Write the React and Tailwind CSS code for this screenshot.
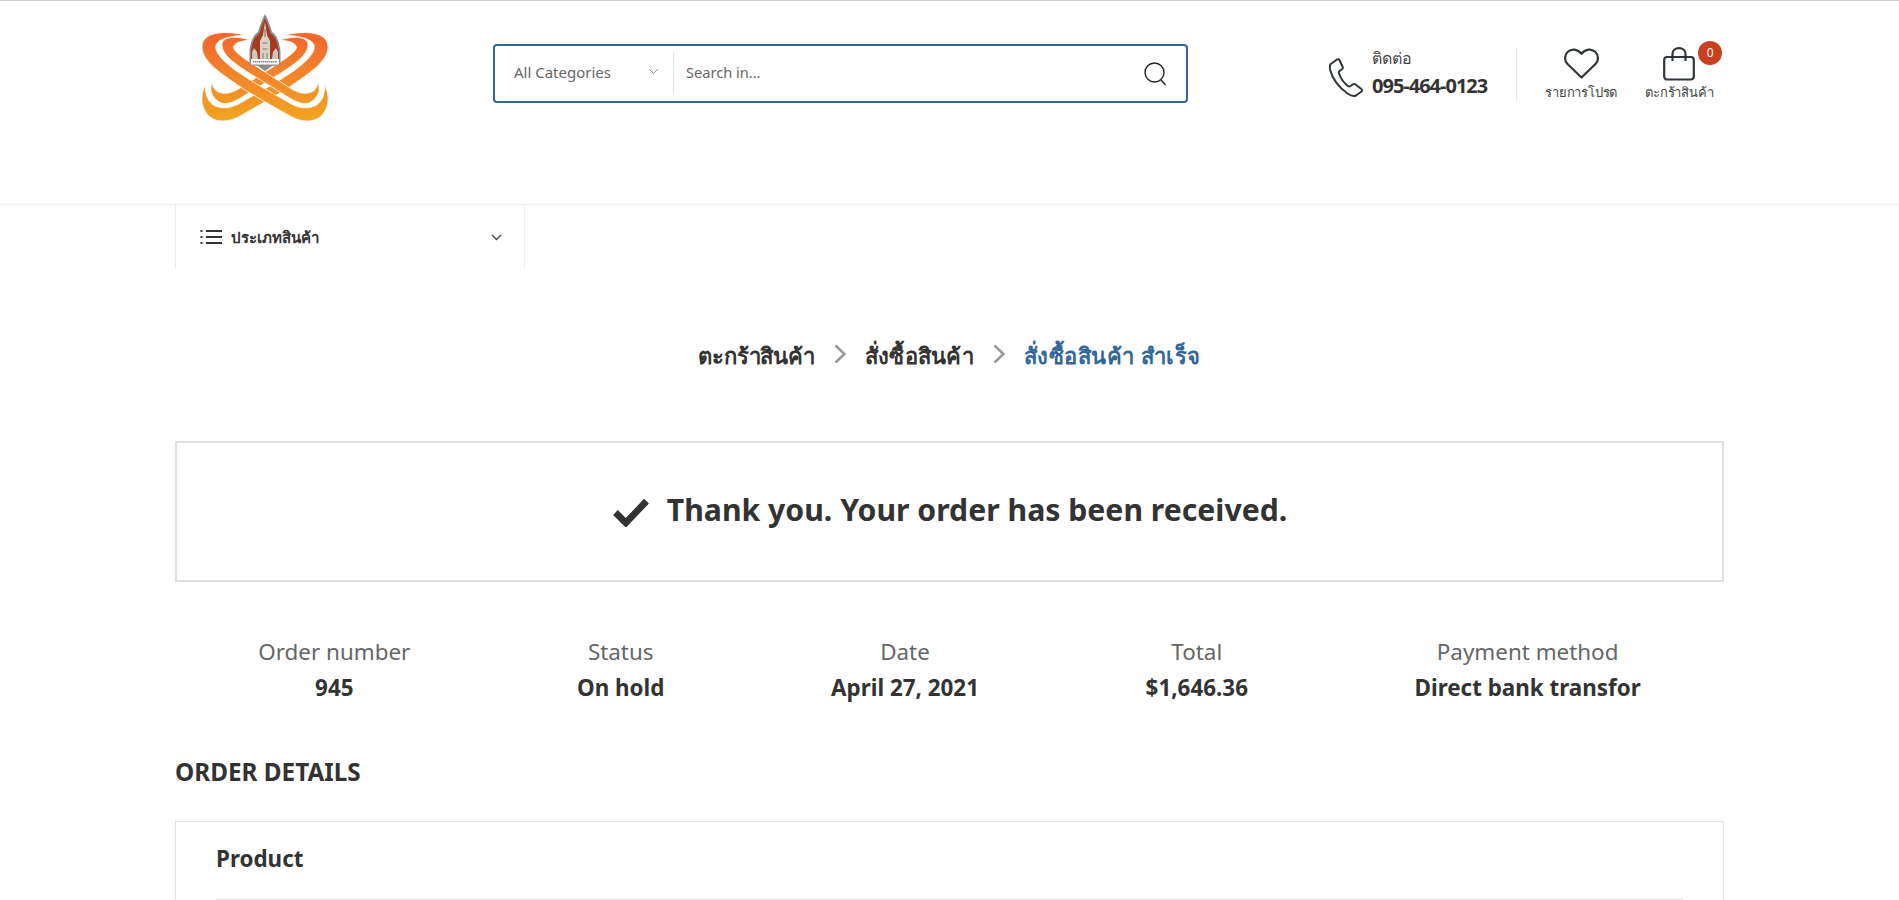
import React from "react";

const FONT = "font-['Noto_Sans',sans-serif]";

function Band({ d, flip }) {
  return <path d={d} fill="url(#swoosh)" stroke="#fff" strokeWidth="0.8" transform={flip ? "translate(150 0) scale(-1 1)" : undefined} />;
}

function Logo() {
  const outer = "M55 30C34 25 12 27 12 42C12 57 32 69 52 83C68 93 84 102 100 111C112 118 126 118 133 109C140 100 139 90 135 80C135 92 130 100 122 102C114 104 106 102 98 97C82 88 62 77 45 65C33 56 24 47 26 40C28 34 40 31 55 30Z";
  const inner = "M60 35C44 30 31 32 32 41C33 50 44 58 56 66C70 75 84 83 98 92C106 97 114 101 121 97C128 92 131 86 128 77C127 84 124 87 118 88C112 89 106 87 100 83C86 74 70 64 55 54C47 48 42 44 44 41C46 37 52 36 60 35Z";
  return (
    <svg width="150" height="120" viewBox="0 0 150 120" className="block">
      <defs>
        <linearGradient id="swoosh" x1="0" y1="30" x2="0" y2="115" gradientUnits="userSpaceOnUse">
          <stop offset="0" stopColor="#f2662c" />
          <stop offset="0.55" stopColor="#f28a2a" />
          <stop offset="1" stopColor="#f2a41f" />
        </linearGradient>
      </defs>
      <Band d={outer} flip />
      <Band d={inner} flip />
      <Band d={outer} />
      <Band d={inner} />
      <path d="M75 9C72 15 70 20 68 27C63 30 60 38 59.500 48V60L68 61L75 66L82 61L90.500 60V48C90 38 87 30 82 27C80 20 78 15 75 9Z" fill="#8a8a8a" />
      <path d="M75 13C73 18 71 23 69.500 28.500C65 31 61.500 38 61 48V54H89V48C88.500 38 85 31 80.500 28.500C79 23 77 18 75 13Z" fill="#a8391f" />
      <path d="M75 17L77 30L80 36V54H70V36L73 30Z" fill="#d9d2c7" />
      <path d="M75 24V32M72.500 38H77.500M72.500 44H77.500M73 48V54M77 48V54" stroke="#6d5a50" strokeWidth="0.8" />
      <path d="M64 43L67 47L68 54H62V47ZM86 43L83 47L82 54H88V47Z" fill="#cfc8bc" />
      <rect x="61" y="54" width="28" height="5.500" fill="#fff" />
      <path d="M63 56.800H87" stroke="#444" strokeWidth="1" strokeDasharray="1.500 0.500" />
    </svg>
  );
}

function PhoneIcon() {
  return (
    <svg width="34" height="39" viewBox="0 0 34 39" fill="none" stroke="#2f353b" strokeWidth="2" strokeLinejoin="round" className="block">
      <path d="M8 1.500L1.800 6C0.500 7 0.700 9.500 1.200 12C3 20 10 30 18.500 35.500C21.500 37.500 25 38.500 27 37.500L32.500 33.500C33.300 32.800 33 31.500 32 30.800L26.500 26.500C25.500 25.800 24.500 25.800 23.500 26.500L21.500 28C20.500 28.700 19.500 28.500 18.500 27.700C15 24.800 11.500 19.800 10 15.500C9.600 14.300 10 13.300 11 12.700L13 11.300C14 10.500 14 9.500 13.500 8.500L10.500 2.200C10 1.200 9 0.800 8 1.500Z" />
    </svg>
  );
}

function Stat({ label, value }) {
  return (
    <div className="text-center">
      <div className="text-[22.4px] leading-[36px] text-[#666]">{label}</div>
      <div className="text-[22.4px] leading-[36px] font-bold text-[#333]">{value}</div>
    </div>
  );
}

function Chevron() {
  return (
    <svg width="12" height="20" viewBox="0 0 12 20" fill="none" stroke="#999" strokeWidth="2.600" className="block mx-[19px] mb-[3px]">
      <path d="M1.500 1.500L10.500 10L1.500 18.500" />
    </svg>
  );
}

export default function App() {
  return (
    <div className={`${FONT} h-[900px] overflow-hidden bg-white text-[#333] border-t border-[#cfcfcf]`}>
      <header className="h-[204px] border-b border-[#eeeeee]">
        <div className="w-[1549px] mx-auto flex items-start">
          <div className="w-[318px] pl-[15px] pt-[4px]">
            <Logo />
          </div>
          <div className="mt-[43px] w-[695px] h-[59px] border-2 border-[#336699] rounded-[4px] flex items-center">
            <div className="w-[179px] h-[43px] border-r border-[#e1e1e1] flex items-center justify-between pl-[19px] pr-[14px]">
              <span className="text-[15px] text-[#666] mb-[2px]">All Categories</span>
              <svg width="11" height="7" viewBox="0 0 11 7" fill="none" stroke="#888" strokeWidth="1" className="block mb-[4px]">
                <path d="M1 1L5.500 5.500L10 1" />
              </svg>
            </div>
            <span className="pl-[12px] text-[14.600px] text-[#666] flex-1 mb-[2px]">Search in...</span>
            <svg width="23" height="24" viewBox="0 0 23 24" fill="none" stroke="#222" strokeWidth="1.400" className="block mr-[19px]">
              <circle cx="10.500" cy="10.500" r="9.500" />
              <path d="M17 18L21.500 23" />
            </svg>
          </div>
          <div className="ml-[141px] mt-[53px] flex items-center">
            <PhoneIcon />
            <div className="ml-[9px] mt-[-7px]">
              <div className="text-[16px] leading-[22px] text-[#444]">ติดต่อ</div>
              <div className="text-[20px] leading-[30px] mt-[2px] font-bold tracking-[-1px] text-[#333]">095-464-0123</div>
            </div>
          </div>
          <div className="ml-[29px] mt-[47px] w-px h-[53px] bg-[#e6e6e6]" />
          <div className="ml-[28px] mt-[47px] w-[72px] flex flex-col items-center">
            <svg width="35" height="31" viewBox="0 0 35 31" fill="none" stroke="#2f353b" strokeWidth="2.200" strokeLinejoin="round" className="block">
              <path d="M17.500 29.500L3.500 16C0 12.500 0.500 7 3.800 3.800C7.500 0.300 13.500 0.800 17.500 5.800C21.500 0.800 27.500 0.300 31.200 3.800C34.500 7 35 12.500 31.500 16Z" />
            </svg>
            <div className="mt-[3px] text-[13px] leading-[20px] tracking-[-0.2px] text-[#444] whitespace-nowrap">รายการโปรด</div>
          </div>
          <div className="ml-[28px] mt-[46px] w-[68px] relative flex flex-col items-center">
            <svg width="32" height="34" viewBox="0 0 32 34" fill="none" stroke="#2f353b" strokeWidth="2.200" strokeLinejoin="round" className="block">
              <rect x="1.200" y="10" width="29.600" height="22.500" rx="3" />
              <path d="M9.500 14V7C9.500 3.500 12 1.200 16 1.200C20 1.200 22.500 3.500 22.500 7V14" />
            </svg>
            <div className="mt-[1px] text-[13px] leading-[20px] tracking-[-0.2px] text-[#444] whitespace-nowrap">ตะกร้าสินค้า</div>
            <span className="absolute left-[53px] top-[-6px] w-[24px] h-[24px] rounded-full bg-[#c8401f] text-white text-[12px] leading-[24px] text-center">0</span>
          </div>
        </div>
      </header>

      <nav className="w-[1549px] mx-auto">
        <div className="w-[350px] h-[64px] border-x border-[#eeeeee] flex items-center pl-[24px] pr-[22px]">
          <svg width="22" height="16" viewBox="0 0 22 16" fill="none" stroke="#333" strokeWidth="1.800" className="block">
            <path d="M6 2H22M6 8H22M6 14H22" />
            <path d="M0.500 2H2.500M0.500 8H2.500M0.500 14H2.500" />
          </svg>
          <span className="ml-[9px] text-[15px] font-semibold text-[#333] flex-1">ประเภทสินค้า</span>
          <svg width="11" height="7" viewBox="0 0 11 7" fill="none" stroke="#444" strokeWidth="1.300" className="block">
            <path d="M1 1L5.500 5.500L10 1" />
          </svg>
        </div>
      </nav>

      <main className="w-[1549px] mx-auto">
        <div className="mt-[64px] h-[44px] flex items-center justify-center text-[22px] font-bold">
          <span className="text-[#333] tracking-[-0.2px]">ตะกร้าสินค้า</span>
          <Chevron />
          <span className="text-[#333] tracking-[0.3px]">สั่งซื้อสินค้า</span>
          <Chevron />
          <span className="text-[#336699] tracking-[0.45px]">สั่งซื้อสินค้า สำเร็จ</span>
        </div>

        <div className="mt-[64px] h-[141px] border-2 border-[#dfdfdf] flex items-center justify-center">
          <svg width="38" height="29" viewBox="0 0 36 28" fill="none" stroke="#333" strokeWidth="6.500" strokeLinejoin="miter" className="block mr-[17px] mt-[2px]">
            <path d="M3 14L13 24L33 3" />
          </svg>
          <h2 className="text-[30.200px] font-bold text-[#333] mb-[4px]">Thank you. Your order has been received.</h2>
        </div>

        <div className="mt-[52px] flex justify-around">
          <Stat label="Order number" value="945" />
          <Stat label="Status" value="On hold" />
          <Stat label="Date" value="April 27, 2021" />
          <Stat label="Total" value="$1,646.36" />
          <Stat label="Payment method" value="Direct bank transfor" />
        </div>

        <h3 className="mt-[49px] text-[24.300px] leading-[34px] font-bold text-[#333]">ORDER DETAILS</h3>

        <div className="mt-[32px] border border-[#e1e1e1] px-[40px] h-[200px]">
          <div className="h-[78px] border-b border-[#e1e1e1] pb-[4px] flex items-center text-[22.4px] font-bold text-[#333]">Product</div>
        </div>
      </main>
    </div>
  );
}
